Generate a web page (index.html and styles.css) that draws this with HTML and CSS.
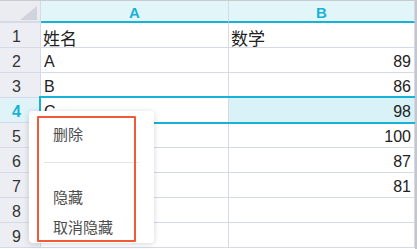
FILE: index.html
```html
<!DOCTYPE html>
<html lang="zh">
<head>
<meta charset="utf-8">
<title>Sheet</title>
<link rel="stylesheet" href="styles.css">
</head>
<body>
<div class="app">
  <div class="sheet">
    <div class="corner"><svg class="corner-tri" width="17" height="14" viewBox="0 0 17 14"><polygon points="17,0 17,14 0,14" fill="#d0d3dc"/></svg></div>
    <div class="colhead">A</div>
    <div class="colhead">B</div>

    <div class="rowhead">1</div><div class="cell cjk">姓名</div><div class="cell cjk">数学</div>
    <div class="rowhead">2</div><div class="cell">A</div><div class="cell num">89</div>
    <div class="rowhead">3</div><div class="cell">B</div><div class="cell num">86</div>
    <div class="rowhead active">4</div><div class="cell">C</div><div class="cell num sel">98</div>
    <div class="rowhead">5</div><div class="cell"></div><div class="cell num">100</div>
    <div class="rowhead">6</div><div class="cell"></div><div class="cell num">87</div>
    <div class="rowhead">7</div><div class="cell"></div><div class="cell num">81</div>
    <div class="rowhead">8</div><div class="cell"></div><div class="cell"></div>
    <div class="rowhead">9</div><div class="cell"></div><div class="cell"></div>
  </div>

  <div class="selection"></div>

  <div class="menu">
    <div class="menu-item">删除</div>
    <div class="menu-sep"></div>
    <div class="menu-item">隐藏</div>
    <div class="menu-item">取消隐藏</div>
    <div class="highlight"></div>
  </div>
</div>
</body>
</html>
```

FILE: styles.css
```css
html, body {
  margin: 0;
  padding: 0;
  background: #ffffff;
}

.app {
  position: relative;
  width: 417px;
  height: 249px;
  overflow: hidden;
  font-family: "Liberation Sans", "Noto Sans CJK SC", sans-serif;
}

.sheet {
  display: grid;
  grid-template-columns: 41px 188px 186px;
  grid-template-rows: 22px repeat(9, 25px);
  width: 417px;
  height: 249px;
  box-sizing: border-box;
  border-top: 1px solid #c9cbd0;
  border-right: 2px solid #c4c6cc;
  background: #ffffff;
}

.sheet > div {
  box-sizing: border-box;
  border-right: 1px solid #d6d9e8;
  border-bottom: 1px solid #d6d9e8;
}

.corner {
  background: #eaecf2;
  display: flex;
  justify-content: flex-end;
  align-items: flex-end;
  padding: 0 3px 1px 0;
  border-bottom: 2px solid #d6d9e8 !important;
}

.corner-tri {
  display: block;
}

.colhead {
  background: #e2f6fa;
  color: #17b3d6;
  font-weight: bold;
  font-size: 15px;
  display: flex;
  align-items: center;
  justify-content: center;
  padding-top: 2px;
  border-bottom: 2px solid #17b3d6 !important;
}

.rowhead {
  background: #eceef4;
  color: #333333;
  font-size: 16px;
  display: flex;
  align-items: center;
  padding-left: 12px;
  padding-top: 4px;
}

.rowhead.active {
  background: #e0f3f8;
  color: #17b3d6;
  font-weight: bold;
}

.cell {
  color: #222222;
  font-size: 16px;
  display: flex;
  align-items: center;
  padding: 4px 3px 0 3px;
  white-space: nowrap;
}

.cell.cjk {
  font-size: 17px;
  padding-left: 2px;
}

.cell.num {
  justify-content: flex-end;
}

.cell.sel {
  background: #d8f2f8;
}

.selection {
  position: absolute;
  left: 39px;
  top: 96px;
  width: 376px;
  height: 28px;
  box-sizing: border-box;
  border: 2px solid #17b3d6;
  border-right: none;
}

.menu {
  position: absolute;
  left: 29px;
  top: 111px;
  width: 125px;
  height: 132px;
  box-sizing: border-box;
  padding: 7px 0 2px 0;
  background: #ffffff;
  border-radius: 4px;
  box-shadow: 0 1px 6px rgba(0, 0, 0, 0.16);
  display: flex;
  flex-direction: column;
  font-family: "Noto Sans CJK SC", sans-serif;
}

.menu-item {
  height: 30px;
  display: flex;
  align-items: center;
  padding-left: 24px;
  font-size: 15px;
  color: #4d4d4d;
}

.menu-sep {
  height: 1px;
  margin: 14px 15px 18px 15px;
  background: #e3e3ea;
}

.highlight {
  position: absolute;
  left: 8px;
  top: 5px;
  width: 99px;
  height: 126px;
  box-sizing: border-box;
  border: 2px solid #f05a38;
  border-radius: 1px;
}
```
